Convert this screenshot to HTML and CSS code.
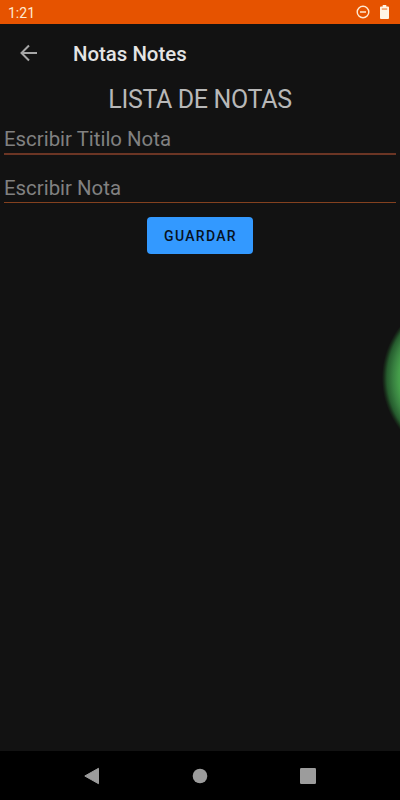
FILE: index.html
```html
<!DOCTYPE html>
<html lang="es">
<head>
  <meta charset="UTF-8">
  <meta name="viewport" content="width=device-width, initial-scale=1.0">
  <title>Notas Notes</title>
  <link rel="stylesheet" href="styles.css">
</head>
<body>
  <div class="status-bar">
    <span class="clock">1:21</span>
    <svg class="dnd" width="14" height="14" viewBox="0 0 14 14">
      <circle cx="7" cy="7" r="5.8" fill="none" stroke="#ffead2" stroke-width="1.4"/>
      <path d="M4 7h6" stroke="#ffead2" stroke-width="1.5"/>
    </svg>
    <svg class="battery" width="9" height="14" viewBox="0 0 9 14">
      <path d="M2.7 0h3.6v1.4H8q1 0 1 1V13q0 1-1 1H1q-1 0-1-1V2.4q0-1 1-1h1.7z" fill="#fff4e4"/>
      <path d="M1.8 3.4h5.4v1.3H1.8z" fill="#ec8a4c"/>
    </svg>
  </div>

  <header class="app-bar">
    <svg class="back" width="18" height="18" viewBox="0 0 18 18">
      <path d="M17 9H2M9 1.5L1.5 9L9 16.5" fill="none" stroke="#a6a6a6" stroke-width="2"/>
    </svg>
    <h1>Notas Notes</h1>
  </header>

  <main>
    <h2>LISTA DE NOTAS</h2>
    <input type="text" id="titulo" placeholder="Escribir Titilo Nota">
    <input type="text" id="nota" placeholder="Escribir Nota">
    <button>GUARDAR</button>
  </main>

  <div class="glow"></div>

  <nav class="nav-bar">
    <svg width="16" height="18" viewBox="0 0 16 18">
      <path d="M14.5 1.3V16.7L.8 9z" fill="#9c9c9c" stroke="#9c9c9c" stroke-linejoin="round"/>
    </svg>
    <svg width="16" height="16" viewBox="0 0 16 16">
      <circle cx="8" cy="8" r="7.3" fill="#9c9c9c"/>
    </svg>
    <svg width="16" height="16" viewBox="0 0 16 16">
      <rect width="16" height="16" rx="1.2" fill="#9c9c9c"/>
    </svg>
  </nav>
</body>
</html>
```

FILE: styles.css
```css
* {
  box-sizing: border-box;
}

body {
  margin: 0;
  font-family: Roboto, sans-serif;
  height: 100vh;
  display: flex;
  flex-direction: column;
  position: relative;
  overflow: hidden;
  background-color: #121212;
}

svg {
  display: block;
}

.status-bar {
  height: 24px;
  display: flex;
  align-items: center;
  padding: 0 11px 0 8px;
  background-color: #e65300;
}

.clock {
  flex: 1;
  font-size: 14px;
  line-height: 16px;
  padding-top: 2px;
  color: #ffead2;
}

.battery {
  margin-left: 10px;
}

.app-bar {
  height: 58px;
  display: flex;
  align-items: center;
  padding: 0 20px 1px;
}

.app-bar h1 {
  margin: 2px 0 0 35px;
  font-size: 20.4px;
  line-height: 24px;
  font-weight: 500;
  color: #e4e4e4;
}

main {
  flex: 1;
  display: flex;
  flex-direction: column;
  align-items: center;
  padding: 0 4px;
}

h2 {
  margin: 3px 0 8px;
  font-size: 25px;
  line-height: 30px;
  font-weight: 400;
  letter-spacing: -0.35px;
  color: #b8b8b8;
}

input[type="text"] {
  width: 100%;
  height: 32px;
  margin-bottom: 16px;
  padding: 1px 0 0;
  border: none;
  border-bottom: 1px solid #84411f;
  outline: none;
  background: none;
  font-family: inherit;
  font-size: 20.4px;
  color: #e4e4e4;
}

#titulo {
  border-bottom: 2px solid #6b3524;
}

#nota {
  margin-bottom: 14px;
  padding-top: 2px;
}

input::placeholder {
  color: #818181;
}

button {
  width: 106px;
  height: 37px;
  padding: 1px 0 0 1px;
  border: none;
  border-radius: 4px;
  background-color: #3399ff;
  color: #07121f;
  font-family: inherit;
  font-size: 14px;
  font-weight: 500;
  letter-spacing: 1.3px;
}

/* edge effect on the right side of the screen */
.glow {
  position: absolute;
  top: 294px;
  right: 0;
  width: 18px;
  height: 168px;
  background: radial-gradient(circle at 84px 50%, #46a04b 67px, #388040 73px, #265c2e 79px, #182c1a 82px, #121212 84px);
}

.nav-bar {
  height: 49px;
  display: flex;
  justify-content: space-between;
  align-items: center;
  padding: 0 84px;
  background-color: #000;
}
```
